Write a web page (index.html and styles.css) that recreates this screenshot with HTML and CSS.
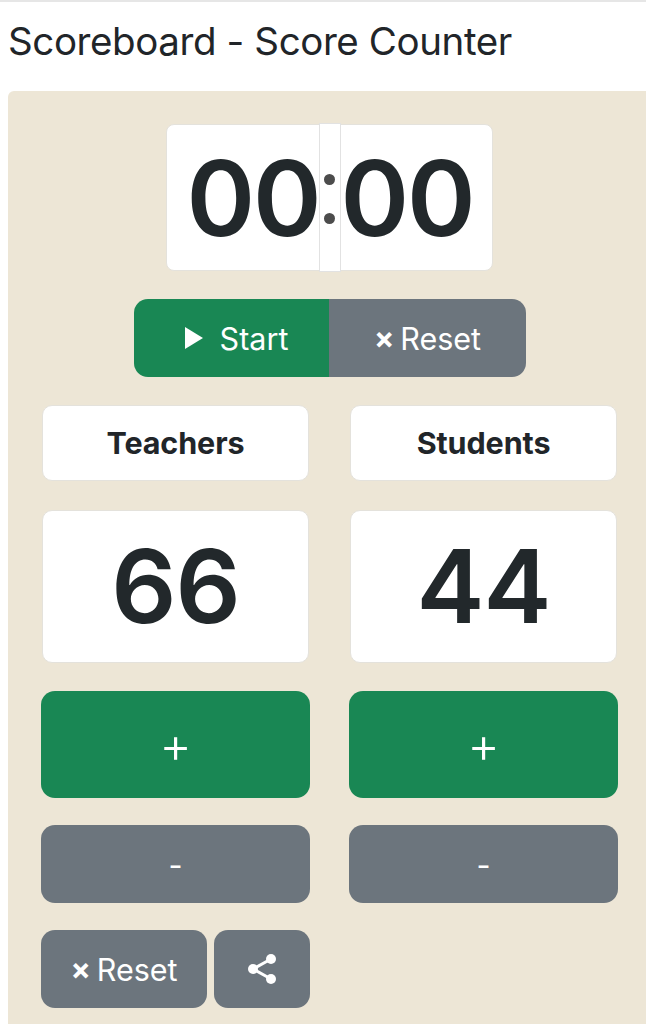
FILE: index.html
```html
<!DOCTYPE html>
<html lang="en">
<head>
  <meta charset="UTF-8" />
  <title>Scoreboard - Score Counter</title>
  <link rel="stylesheet" href="styles.css">
</head>
<body>

  <h1>Scoreboard - Score Counter</h1>

  <div class="panel">
    <div class="timer">
      <span class="digits">00</span>
      <span class="colon"><i></i><i></i></span>
      <span class="digits">00</span>
    </div>

    <div class="timer-btns">
      <div class="btn green">
        <svg class="play" viewBox="0 0 18 22" width="18" height="22"><path d="M0 0 18 11 0 22Z" fill="#fff"/></svg>
        Start
      </div>
      <div class="btn gray"><span class="times">×</span> Reset</div>
    </div>

    <div class="teams">
      <div class="team">
        <div class="name">Teachers</div>
        <div class="score">66</div>
        <div class="btn green plus">+</div>
        <div class="btn gray minus">-</div>
        <div class="tools">
          <div class="btn gray reset"><span class="times">×</span> Reset</div>
          <div class="btn gray share">
            <svg viewBox="0 0 32 34" width="32" height="34">
              <path d="M25 7 7 17 25 27" fill="none" stroke="#fff" stroke-width="3"/>
              <circle cx="25" cy="7" r="5" fill="#fff"/>
              <circle cx="7" cy="17" r="5" fill="#fff"/>
              <circle cx="25" cy="27" r="5" fill="#fff"/>
            </svg>
          </div>
        </div>
      </div>
      <div class="team">
        <div class="name">Students</div>
        <div class="score">44</div>
        <div class="btn green plus">+</div>
        <div class="btn gray minus">-</div>
      </div>
    </div>
  </div>

</body>
</html>
```

FILE: styles.css
```css
html, body {
  height: 1024px;
  overflow: hidden;
}
body {
  font-family: 'Inter', 'Liberation Sans', sans-serif;
  background: #fff;
  color: #212529;
  margin: 0;
  border-top: 2px solid #e6e6e6;
}
h1 {
  font-size: 38.500px;
  font-weight: 400;
  line-height: 46px;
  letter-spacing: -0.4px;
  margin: 16px 0 27px 8px;
}
.panel {
  background: #ede6d6;
  border-radius: 6px 0 0 6px;
  margin-left: 8px;
  padding: 33px 28px 16px 33px;
  height: 945px;
  box-sizing: border-box;
}
.timer {
  width: 327px;
  height: 147px;
  margin: 0 0 0 125px;
  display: flex;
  justify-content: center;
  align-items: center;
  background: #fff;
  border: 1px solid #e4e2dc;
  border-radius: 8px;
  box-sizing: border-box;
}
.digits {
  font-size: 104px;
  font-weight: 600;
  line-height: 1;
  width: 132px;
  text-align: center;
  letter-spacing: -2px;
  color: #22282b;
}
.colon {
  width: 22px;
  height: 149px;
  flex-direction: column;
  display: flex;
  align-items: center;
  justify-content: center;
  gap: 28px;
  background: #fff;
  border: 1px solid #e2e2e2;
  box-sizing: border-box;
  margin: -1px 0;
  padding-top: 2px;
}
.colon i {
  width: 11px;
  height: 11px;
  border-radius: 50%;
  background: #4c4c4c;
}
.btn {
  display: flex;
  align-items: center;
  justify-content: center;
  color: #fff;
  font-size: 30.500px;
  border-radius: 10px;
}
.green { background: #198754; }
.gray { background: #6c757d; }
.timer-btns {
  display: flex;
  width: 392px;
  height: 78px;
  margin: 28px 0 28px 93px;
}
.timer-btns .green {
  width: 195px;
  padding-left: 10px;
  box-sizing: border-box;
  border-radius: 14px 0 0 14px;
}
.timer-btns .gray {
  width: 197px;
  border-radius: 0 14px 14px 0;
}
.play { margin-right: 17px; }
.times {
  font-size: 30px;
  font-weight: 700;
  margin-right: 6px;
}
.teams {
  display: grid;
  grid-template-columns: 269px 269px;
  gap: 39px;
}
.team {
  display: flex;
  flex-direction: column;
}
.name, .score {
  margin: 0 1px;
  background: #fff;
  border: 1px solid #e4e2dc;
  border-radius: 10px;
  box-sizing: border-box;
  display: flex;
  align-items: center;
  justify-content: center;
}
.name {
  height: 76px;
  padding-bottom: 2px;
  font-size: 30.500px;
  font-weight: 700;
  letter-spacing: -0.1px;
}
.score {
  height: 153px;
  margin-top: 29px;
  padding-bottom: 2px;
  font-size: 102px;
  font-weight: 600;
  letter-spacing: -1px;
  color: #22282b;
}
.plus {
  height: 107px;
  margin-top: 28px;
  font-size: 50px;
  font-weight: 300;
  border-radius: 14px;
}
.minus {
  height: 78px;
  margin-top: 27px;
  border-radius: 14px;
}
.tools {
  display: flex;
  gap: 7px;
  margin-top: 27px;
}
.reset, .share {
  height: 78px;
  border-radius: 14px;
}
.reset { width: 166px; }
.share { width: 96px; }
```
